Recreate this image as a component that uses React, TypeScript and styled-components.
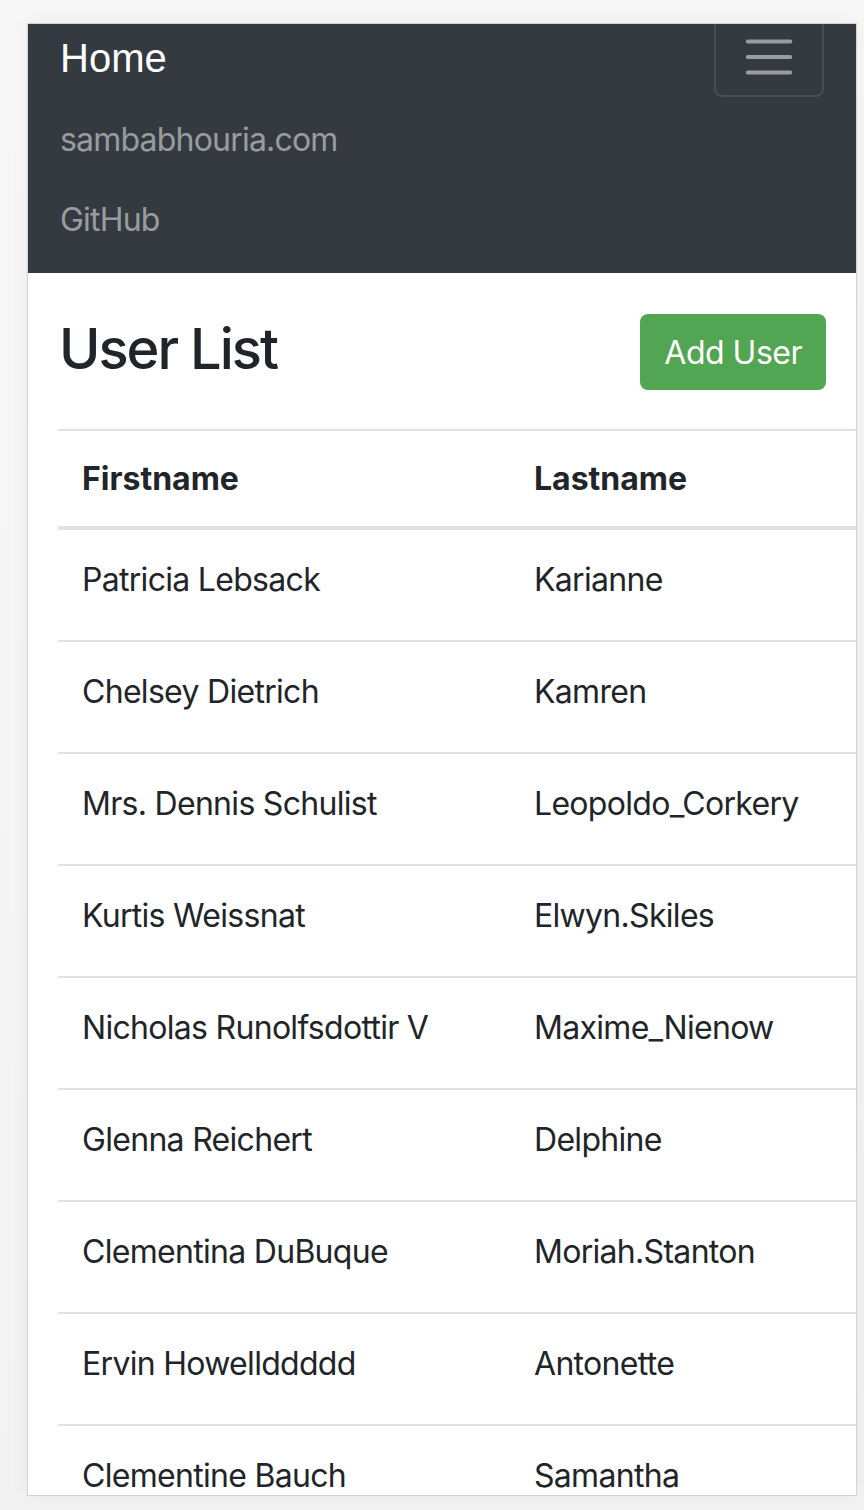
import React from "react";
import styled, { createGlobalStyle } from "styled-components";

const GlobalStyle = createGlobalStyle`
  html, body { margin: 0; padding: 0; }
  body {
    background: #f4f4f4;
    font-family: Inter, "Noto Sans", "Liberation Sans", sans-serif;
    color: #212529;
  }
  * { box-sizing: border-box; }
`;

const Frame = styled.div`
  padding: 23px 0 0 27px;
  width: 864px;
  height: 1510px;
  background: linear-gradient(#f7f7f7, #f2f2f2);
`;

const Viewport = styled.div`
  width: 830px;
  height: 1473px;
  border: 1px solid #d2d2d2;
  background: #ffffff;
  overflow: hidden;
  box-shadow: 0 0 18px rgba(0, 0, 0, 0.05);
`;

const Page = styled.div`
  margin-top: -23px;
`;

const Navbar = styled.nav`
  background: #343a40;
  padding: 16px 32px;
`;

const BrandRow = styled.div`
  display: flex;
  justify-content: space-between;
  align-items: center;
`;

const Brand = styled.a`
  display: block;
  padding: 11px 0 9px;
  font-family: "Liberation Sans", Arial, sans-serif;
  font-size: 40px;
  line-height: 60px;
  color: #ffffff;
  text-decoration: none;
`;

const Toggler = styled.button`
  display: flex;
  align-items: center;
  justify-content: center;
  width: 110px;
  height: 80px;
  padding: 8px 24px;
  background: transparent;
  border: 2px solid rgba(255, 255, 255, 0.1);
  border-radius: 8px;
`;

const NavList = styled.div`
  display: flex;
  flex-direction: column;
`;

const NavLink = styled.a`
  display: block;
  padding: 19px 0 13px;
  font-size: 32px;
  line-height: 48px;
  letter-spacing: -0.8px;
  color: rgba(255, 255, 255, 0.5);
  text-decoration: none;
`;

const Container = styled.main`
  padding: 41px 30px 0;
`;

const HeaderRow = styled.div`
  display: flex;
  justify-content: space-between;
  align-items: flex-start;
  margin-bottom: 39px;
`;

const Title = styled.h3`
  margin: 2px 0 0 1px;
  font-size: 56px;
  line-height: 67px;
  font-weight: 500;
  letter-spacing: -2px;
  color: #212529;
`;

const AddButton = styled.button`
  padding: 15px 24px 13px;
  border: none;
  border-radius: 8px;
  background: #52a552;
  color: #ffffff;
  font-family: inherit;
  font-size: 32px;
  line-height: 48px;
  font-weight: 400;
  letter-spacing: -0.5px;
`;

const Table = styled.div`
  width: 830px;
  border-top: 2px solid #dee2e6;
`;

const Row = styled.div<{ $head?: boolean }>`
  display: grid;
  grid-template-columns: 452px 1fr;
  border-bottom: ${(p) => (p.$head ? "4px" : "2px")} solid #dee2e6;
`;

const Cell = styled.div<{ $head?: boolean }>`
  padding: ${(p) => (p.$head ? "24px 24px 23px" : "26px 24px 36px")};
  font-size: 32px;
  line-height: 48px;
  font-weight: ${(p) => (p.$head ? 700 : 400)};
  letter-spacing: ${(p) => (p.$head ? "0" : "-0.7px")};
  color: #212529;
  white-space: nowrap;
`;

const users: [string, string][] = [
  ["Patricia Lebsack", "Karianne"],
  ["Chelsey Dietrich", "Kamren"],
  ["Mrs. Dennis Schulist", "Leopoldo_Corkery"],
  ["Kurtis Weissnat", "Elwyn.Skiles"],
  ["Nicholas Runolfsdottir V", "Maxime_Nienow"],
  ["Glenna Reichert", "Delphine"],
  ["Clementina DuBuque", "Moriah.Stanton"],
  ["Ervin Howellddddd", "Antonette"],
  ["Clementine Bauch", "Samantha"],
];

const HamburgerIcon = () => (
  <svg width="60" height="60" viewBox="0 0 30 30" aria-hidden="true">
    <path
      d="M4 7h22M4 15h22M4 23h22"
      stroke="rgba(255,255,255,0.5)"
      strokeWidth="2"
      strokeLinecap="round"
      fill="none"
    />
  </svg>
);

export default function App() {
  return (
    <>
      <GlobalStyle />
      <Frame>
        <Viewport>
          <Page>
            <Navbar>
              <BrandRow>
                <Brand href="#">Home</Brand>
                <Toggler aria-label="Toggle navigation">
                  <HamburgerIcon />
                </Toggler>
              </BrandRow>
              <NavList>
                <NavLink href="#">sambabhouria.com</NavLink>
                <NavLink href="#">GitHub</NavLink>
              </NavList>
            </Navbar>
            <Container>
              <HeaderRow>
                <Title>User List</Title>
                <AddButton>Add User</AddButton>
              </HeaderRow>
              <Table>
                <Row $head>
                  <Cell $head>Firstname</Cell>
                  <Cell $head>Lastname</Cell>
                </Row>
                {users.map(([first, last]) => (
                  <Row key={first}>
                    <Cell>{first}</Cell>
                    <Cell>{last}</Cell>
                  </Row>
                ))}
              </Table>
            </Container>
          </Page>
        </Viewport>
      </Frame>
    </>
  );
}
